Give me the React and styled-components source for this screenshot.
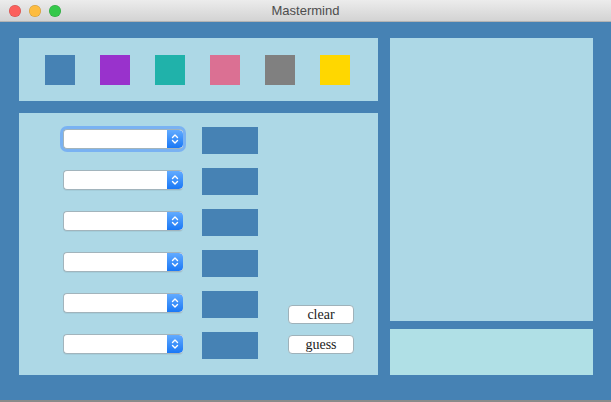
import React from "react";
import styled, { createGlobalStyle } from "styled-components";

// colours
const steel = "#4682b4";
const light = "#add8e6";
const powder = "#b0e0e6";

const pegColors = ["#4682b4", "#9932cc", "#20b2aa", "#db7093", "#808080", "#ffd700"];

const Global = createGlobalStyle`
  html, body { margin: 0; padding: 0; background: #ececec; }
  body { font-family: "Liberation Sans", Arial, sans-serif; }
`;

const Window = styled.div`
  width: 611px;
  height: 402px;
  display: flex;
  flex-direction: column;
  overflow: hidden;
`;

const TitleBar = styled.div`
  height: 21px;
  position: relative;
  display: flex;
  align-items: center;
  justify-content: center;
  background: linear-gradient(#ececec, #d3d3d3);
  border-bottom: 1px solid #b3b3b3;
  color: #4d4d4d;
  font-size: 13px;
  font-family: "Liberation Sans", "DejaVu Sans", sans-serif;
`;

const Lights = styled.div`
  position: absolute;
  left: 9px;
  top: 5px;
  display: flex;
  gap: 8px;
`;

const Light = styled.span`
  width: 12px;
  height: 12px;
  border-radius: 50%;
  background: ${(p) => p.$c};
  box-shadow: inset 0 0 0 0.5px rgba(0, 0, 0, 0.2);
`;

const Content = styled.div`
  height: 380px;
  box-sizing: border-box;
  background: ${steel};
  padding: 16px 18px 25px 19px;
  display: grid;
  grid-template-columns: 359px 203px;
  column-gap: 12px;
  border-bottom: 2px solid #8a8a8a;
`;

const LeftCol = styled.div`
  display: flex;
  flex-direction: column;
  gap: 12px;
`;

const RightCol = styled.div`
  display: flex;
  flex-direction: column;
  gap: 8px;
`;

const Palette = styled.div`
  height: 63px;
  background: ${light};
  display: flex;
  align-items: center;
  padding-left: 26px;
  gap: 25px;
`;

const Peg = styled.div`
  width: 30px;
  height: 30px;
  background: ${(p) => p.$c};
`;

const Board = styled.div`
  flex: 1;
  background: ${light};
  display: flex;
  padding: 14px 0 0 44px;
`;

const Rows = styled.div`
  display: flex;
  flex-direction: column;
  gap: 14px;
`;

const Row = styled.div`
  display: flex;
  align-items: flex-start;
  gap: 19px;
`;

const Popup = styled.div`
  width: 120px;
  height: 20px;
  margin-top: 2px;
  box-sizing: border-box;
  display: flex;
  border-radius: 4px;
  background: #fff;
  border: 1px solid #a2b4bc;
  border-right: none;
  box-shadow: ${(p) => (p.$focus ? "0 0 0 3px rgba(105, 165, 245, 0.75)" : "0 1px 0 rgba(0,0,0,0.05)")};
  overflow: hidden;
`;

const Field = styled.div`
  flex: 1;
`;

const Stepper = styled.div`
  width: 16px;
  display: flex;
  align-items: center;
  justify-content: center;
  background: linear-gradient(#62abff, #1a78f6);
  border-radius: 0 4px 4px 0;
`;

const Slot = styled.div`
  width: 56px;
  height: 27px;
  background: ${steel};
`;

const Buttons = styled.div`
  display: flex;
  flex-direction: column;
  gap: 11px;
  align-self: flex-end;
  margin: 0 0 21px 30px;
`;

const Button = styled.button`
  width: 66px;
  height: 19px;
  padding: 0;
  background: #fff;
  border: 1px solid #9fb2ba;
  border-radius: 4px;
  font-family: "Liberation Serif", "Times New Roman", serif;
  font-size: 14px;
  line-height: 16px;
  color: #222;
`;

const Panel = styled.div`
  background: ${(p) => p.$bg};
  flex: ${(p) => (p.$grow ? 1 : "none")};
  height: ${(p) => (p.$grow ? "auto" : "46px")};
`;

function Chevrons() {
  return (
    <svg width="8" height="12" viewBox="0 0 8 12" fill="none" stroke="#fff" strokeWidth="1.4" strokeLinecap="round" strokeLinejoin="round">
      <path d="M1.5 4.5 L4 2 L6.5 4.5" />
      <path d="M1.5 7.5 L4 10 L6.5 7.5" />
    </svg>
  );
}

export default function App() {
  return (
    <>
      <Global />
      <Window>
        <TitleBar>
          <Lights>
            <Light $c="#fc605c" />
            <Light $c="#fdbc40" />
            <Light $c="#34c84a" />
          </Lights>
          Mastermind
        </TitleBar>
        <Content>
          <LeftCol>
            <Palette>
              {pegColors.map((c) => (
                <Peg key={c} $c={c} />
              ))}
            </Palette>
            <Board>
              <Rows>
                {[0, 1, 2, 3, 4, 5].map((i) => (
                  <Row key={i}>
                    <Popup $focus={i === 0}>
                      <Field />
                      <Stepper>
                        <Chevrons />
                      </Stepper>
                    </Popup>
                    <Slot />
                  </Row>
                ))}
              </Rows>
              <Buttons>
                <Button>clear</Button>
                <Button>guess</Button>
              </Buttons>
            </Board>
          </LeftCol>
          <RightCol>
            <Panel $bg={light} $grow />
            <Panel $bg={powder} />
          </RightCol>
        </Content>
      </Window>
    </>
  );
}
